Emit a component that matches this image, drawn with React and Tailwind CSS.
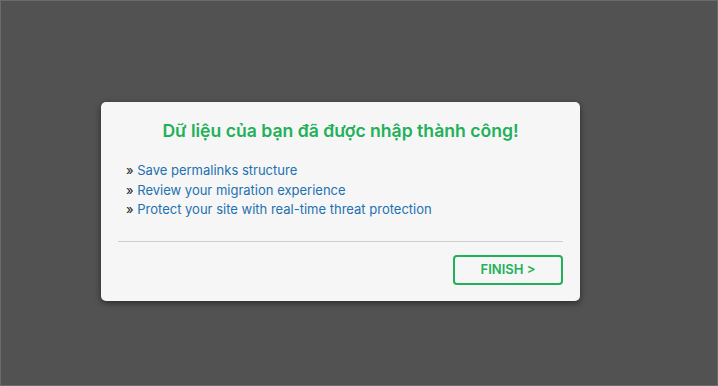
export default function App() {
  return (
    <div className="w-[718px] h-[386px] bg-[#525252] border border-[#6a6a6a] pt-[101px] pl-[100px]" style={{ fontFamily: "Inter, 'Noto Sans', sans-serif" }}>
      <div className="w-[479px] h-[199px] bg-[#f6f6f6] rounded-[5px] shadow-[0_2px_6px_rgba(0,0,0,0.5)] px-[17px] pt-[17px] flex flex-col">
        <h1 className="text-center text-[17.6px] font-semibold text-[#22b05a] leading-[24px]">Dữ liệu của bạn đã được nhập thành công!</h1>
        <ul className="mt-[18px] pl-[8px] text-[13px] leading-[19.5px]">
          <li><span className="text-[#222]">» </span><span className="text-[#2271b1]">Save permalinks structure</span></li>
          <li><span className="text-[#222]">» </span><span className="text-[#2271b1]">Review your migration experience</span></li>
          <li><span className="text-[#222]">» </span><span className="text-[#2271b1]">Protect your site with real-time threat protection</span></li>
        </ul>
        <div className="mt-[21px] border-t border-[#cfcfcf]" />
        <div className="flex justify-end mt-[13px]">
          <button className="w-[110px] h-[30px] border-2 border-[#22b05a] rounded-[4px] text-[#22b05a] text-[13px] font-semibold">FINISH &gt;</button>
        </div>
      </div>
    </div>
  );
}
